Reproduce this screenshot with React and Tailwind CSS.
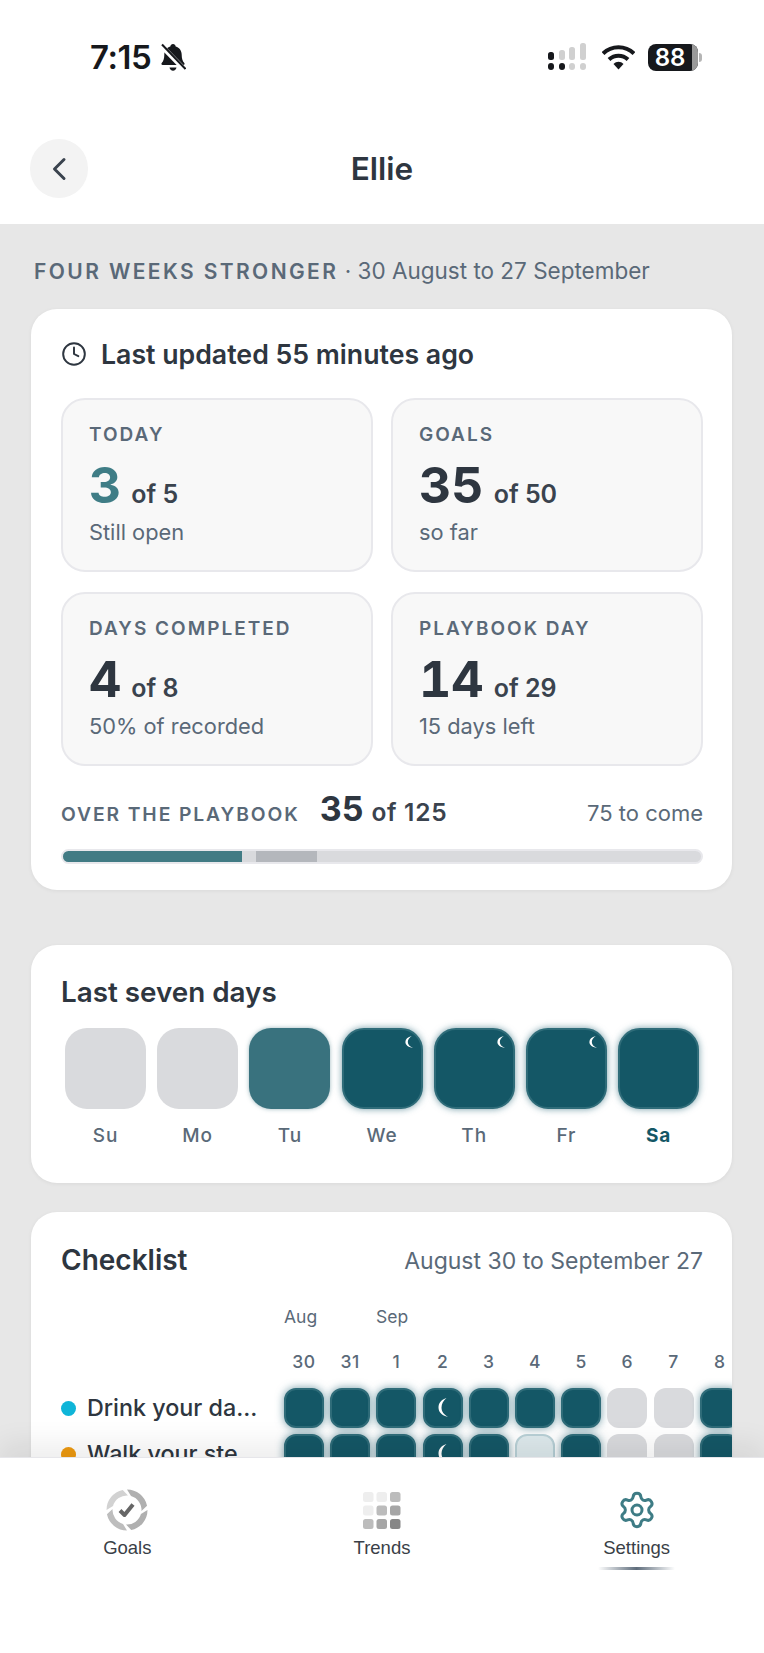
import { Clock, Settings } from 'lucide-react';

const stats = [
  { label: 'TODAY', value: '3', of: 'of 5', note: 'Still open', accent: true },
  { label: 'GOALS', value: '35', of: 'of 50', note: 'so far' },
  { label: 'DAYS COMPLETED', value: '4', of: 'of 8', note: '50% of recorded' },
  { label: 'PLAYBOOK DAY', value: '14', of: 'of 29', note: '15 days left' },
];

const week = [
  { day: 'Su', state: 'gray' },
  { day: 'Mo', state: 'gray' },
  { day: 'Tu', state: 'mid' },
  { day: 'We', state: 'dark', moon: true },
  { day: 'Th', state: 'dark', moon: true },
  { day: 'Fr', state: 'dark', moon: true },
  { day: 'Sa', state: 'dark', today: true },
];

const dates = ['30', '31', '1', '2', '3', '4', '5', '6', '7', '8'];

const rows = [
  { name: 'Drink your da...', dot: 'bg-[#0fb5d8]', cells: 'dddmdddggd' },
  { name: 'Walk your ste...', dot: 'bg-[#ee9a10]', cells: 'dddmdldggd' },
];

const Moon = ({ className }) => (
  <svg className={className} viewBox="0 0 8 12" fill="#fff" preserveAspectRatio="none">
    <path d="M6.800 0C2.600 1 0.400 3.200 0.400 6C0.400 8.800 2.800 11 8 12C4.800 10.500 2.800 8.600 2.800 6C2.800 3.600 4.400 1.500 6.800 0Z" />
  </svg>
);

const StatusBar = () => (
  <div className="flex justify-between items-start h-[128px] pt-[43px] pl-[90px] pr-[62px]">
    <div className="flex items-center h-[29px] text-[#16181c]">
      <span className="text-[33px] leading-[29px] font-semibold font-['Inter',sans-serif] tracking-[-0.5px]">7:15</span>
      <svg className="ml-[9px]" width="26" height="29" viewBox="0 0 26 29">
        <path d="M13 1c1.500 0 2.500 1 2.700 2.400 3.800 1 6 4.200 6 8.400 0 3.600.8 6.400 2.600 8.200.7.8.2 2-.9 2H2.600c-1.100 0-1.600-1.200-.9-2 1.800-1.800 2.600-4.600 2.600-8.200 0-4.200 2.200-7.400 6-8.400C10.500 2 11.500 1 13 1Z" fill="#16181c" />
        <path d="M9.500 24.500h7c-.3 2-1.700 3.200-3.500 3.200s-3.200-1.200-3.500-3.200Z" fill="#16181c" />
        <path d="M1 2.500L25 27" stroke="#fff" strokeWidth="5" />
        <path d="M2 1.500L25.500 26" stroke="#16181c" strokeWidth="2" />
      </svg>
    </div>
    <div className="flex items-center">
      <svg width="40" height="28" viewBox="0 0 40 28">
        <rect x="0" y="9" width="6" height="8" rx="2.500" fill="#16181c" />
        <rect x="11" y="7" width="6" height="10" rx="2.500" fill="#d0d0d0" />
        <rect x="21" y="4" width="6" height="13" rx="2.500" fill="#d0d0d0" />
        <rect x="32" y="0" width="6" height="17" rx="2.500" fill="#d0d0d0" />
        <rect x="0" y="20" width="6" height="7" rx="3" fill="#16181c" />
        <rect x="11" y="20" width="6" height="7" rx="3" fill="#16181c" />
        <rect x="21" y="20" width="6" height="7" rx="3" fill="#d0d0d0" />
        <rect x="32" y="20" width="6" height="7" rx="3" fill="#d0d0d0" />
      </svg>
      <svg className="ml-[14px]" width="33" height="25" viewBox="0 0 33 25">
        <path d="M1 8.500C9.500 0 23.500 0 32 8.500" fill="none" stroke="#16181c" strokeWidth="4" />
        <path d="M7 14.500C12.500 9.500 20.500 9.500 26 14.500" fill="none" stroke="#16181c" strokeWidth="4" />
        <path d="M11.500 19C14.500 16 18.500 16 21.500 19L16.500 24.500Z" fill="#16181c" />
      </svg>
      <div className="ml-[13px] flex items-center">
        <div className="w-[50px] h-[27px] rounded-[8px] overflow-hidden bg-[#16181c] flex">
          <div className="w-[44px] text-center text-white text-[24px] leading-[27px] font-semibold font-['Inter',sans-serif]">88</div>
          <div className="flex-1 bg-[#9a9a9a]" />
        </div>
        <div className="ml-[1px] w-[3px] h-[9px] rounded-r-full bg-[#b5b5b5]" />
      </div>
    </div>
  </div>
);

const Header = () => (
  <div className="flex items-center h-[96px] px-[30px] pb-[15px] bg-white">
    <button className="w-[58px] h-[59px] rounded-full bg-[#f3f3f3] flex items-center justify-center">
      <svg width="18" height="24" viewBox="0 0 18 24" fill="none" stroke="#3a434e" strokeWidth="3" strokeLinecap="round" strokeLinejoin="round">
        <path d="M14 2.500L4.500 12L14 21.500" />
      </svg>
    </button>
    <h1 className="flex-1 text-center text-[31.500px] leading-[36px] font-semibold text-[#2e3640]">Ellie</h1>
    <div className="w-[58px]" />
  </div>
);

const StatCard = ({ stat }) => (
  <div className="h-[174px] rounded-[24px] border-2 border-[#e8e8ec] bg-[#f8f8f8] pl-[26px] pt-[24px]">
    <div className="text-[19px] leading-[22px] font-semibold tracking-[2px] text-[#5a6978]">{stat.label}</div>
    <div className="flex items-baseline mt-[10px] h-[58px]">
      <span className={`text-[50px] leading-[58px] font-bold tabular-nums ${stat.accent ? 'text-[#3f7d86]' : 'text-[#2e3640]'}`}>{stat.value}</span>
      <span className="ml-[10px] text-[25px] font-semibold text-[#3a434e]">{stat.of}</span>
    </div>
    <div className="mt-[4px] text-[21.800px] leading-[28px] text-[#5a6978]">{stat.note}</div>
  </div>
);

const OverviewCard = () => (
  <section className="rounded-[26px] bg-white shadow-[0_1px_4px_rgba(0,0,0,0.06)] h-[581px] pl-[30px] pr-[29px] pt-[28px]">
    <div className="flex items-center h-[34px]">
      <Clock size={26} strokeWidth={1.8} color="#2e3640" />
      <span className="ml-[14px] text-[26.700px] leading-[34px] font-semibold text-[#2e3640] whitespace-nowrap">Last updated 55 minutes ago</span>
    </div>
    <div className="grid grid-cols-2 gap-x-[18px] gap-y-[20px] mt-[27px]">
      {stats.map((s) => <StatCard key={s.label} stat={s} />)}
    </div>
    <div className="flex items-baseline mt-[21px] h-[44px]">
      <span className="text-[19.300px] font-semibold tracking-[1.900px] text-[#5a6978]">OVER THE PLAYBOOK</span>
      <span className="ml-[20px] text-[34px] leading-[44px] font-bold text-[#2e3640]">35</span>
      <span className="ml-[8px] text-[24.500px] font-semibold tracking-[0.7px] text-[#3a434e]">of 125</span>
      <span className="ml-auto text-[22px] text-[#5a6978]">75 to come</span>
    </div>
    <div className="flex mt-[18px] h-[15px] rounded-full border-2 border-[#e8e8ec] bg-[#d9dadd] overflow-hidden">
      <div className="w-[179px] bg-[#417b84]" />
      <div className="w-[14px]" />
      <div className="w-[61px] bg-[#b4b7bc]" />
    </div>
  </section>
);

const WeekCard = () => (
  <section className="mt-[55px] rounded-[26px] bg-white shadow-[0_1px_4px_rgba(0,0,0,0.06)] h-[238px] pl-[34px] pr-[32px] pt-[30px]">
    <h2 className="-ml-[4px] text-[27.800px] leading-[34px] font-semibold text-[#2e3640]">Last seven days</h2>
    <div className="flex gap-[11.200px] mt-[19px]">
      {week.map((d) => (
        <div key={d.day} className="w-[81px]">
          <div className={`relative h-[81px] rounded-[22px] ${d.state === 'gray' ? 'bg-[#d9dadd]' : d.state === 'mid' ? 'bg-[#39727e] shadow-[0_0_4px_rgba(57,114,126,0.5)]' : 'bg-[#145766] border-2 border-[#2f6c79] shadow-[0_0_7px_rgba(20,88,106,0.6)]'}`}>
            {d.moon && <Moon className="absolute top-[6px] right-[8px] w-[8px] h-[12px]" />}
          </div>
          <div className={`mt-[15px] text-center text-[19px] leading-[24px] tracking-[1px] ${d.today ? 'font-bold text-[#145766]' : 'font-medium text-[#5a6978]'}`}>{d.day}</div>
        </div>
      ))}
    </div>
  </section>
);

const cellClass = {
  d: 'bg-[#145766] border-2 border-[#2f6c79] shadow-[0_0_8px_rgba(20,88,106,0.6)]',
  m: 'bg-[#145766] border-2 border-[#2f6c79] shadow-[0_0_8px_rgba(20,88,106,0.6)]',
  g: 'bg-[#d9dadd]',
  l: 'bg-[#dde9ec] border-2 border-[#b8d0d6]',
};

const ChecklistCard = () => (
  <section className="mt-[29px] rounded-[26px] bg-white shadow-[0_1px_4px_rgba(0,0,0,0.06)] h-[400px] overflow-hidden pl-[30px] pt-[31px]">
    <div className="flex items-center justify-between pr-[29px] h-[34px]">
      <h2 className="text-[28px] leading-[34px] font-semibold text-[#2e3640]">Checklist</h2>
      <span className="text-[23px] text-[#5a6978] mt-[2px]">August 30 to September 27</span>
    </div>
    <div className="pl-[223px] flex mt-[28px] h-[24px] text-[17.500px] leading-[24px] text-[#5a6978]">
      <span className="w-[92px]">Aug</span>
      <span>Sep</span>
    </div>
    <div className="pl-[223px] flex gap-[6.200px] mt-[21px] h-[24px]">
      {dates.map((d) => (
        <span key={d} className="w-[40px] shrink-0 text-center text-[17.500px] leading-[24px] font-medium tracking-[0.5px] text-[#5a6978]">{d}</span>
      ))}
    </div>
    <div className="flex flex-col gap-[6px] mt-[14px]">
      {rows.map((row) => (
        <div key={row.name} className="flex items-center h-[40px]">
          <span className={`w-[15px] h-[15px] rounded-full shrink-0 ${row.dot}`} />
          <span className="w-[208px] shrink-0 pl-[11px] text-[23.300px] font-medium text-[#2e3640] whitespace-nowrap">{row.name}</span>
          <div className="flex gap-[6.200px]">
            {row.cells.split('').map((c, i) => (
              <div key={i} className={`relative w-[40px] h-[40px] shrink-0 rounded-[12px] ${cellClass[c]}`}>
                {c === 'm' && <Moon className="absolute top-[8px] left-[13px] w-[10px] h-[19px]" />}
              </div>
            ))}
          </div>
        </div>
      ))}
    </div>
  </section>
);

// pinwheel ring: outer edge runs a0..a1, inner edge is skewed round by 16deg
const ringSegment = (a0, a1) => {
  const pt = (r, deg) => {
    const t = (deg * Math.PI) / 180;
    return `${(21 + r * Math.sin(t)).toFixed(2)} ${(21 - r * Math.cos(t)).toFixed(2)}`;
  };
  return `M${pt(20.500, a0)}A20.500 20.500 0 0 1 ${pt(20.500, a1)}L${pt(14.500, a1 + 16)}A14.500 14.500 0 0 0 ${pt(14.500, a0 + 16)}Z`;
};

const goalRing = [
  { from: 0, to: 78, fill: '#b0b0b0' },
  { from: 90, to: 168, fill: '#b0b0b0' },
  { from: 180, to: 258, fill: '#bdbdbd' },
  { from: 270, to: 348, fill: '#d2d2d2' },
];

const GoalsIcon = () => (
  <svg width="42" height="42" viewBox="0 0 42 42" fill="none">
    {goalRing.map((s) => <path key={s.from} d={ringSegment(s.from, s.to)} fill={s.fill} />)}
    <path d="M14 21.500L18.500 26L27 15.500" stroke="#666666" strokeWidth="4" strokeLinejoin="round" />
  </svg>
);

const trendColors = ['#eeeeee', '#eeeeee', '#bcbcbc', '#eeeeee', '#bcbcbc', '#a6a6a6', '#bcbcbc', '#a6a6a6', '#878787'];

const TrendsIcon = () => (
  <svg width="38" height="37" viewBox="0 0 38 37">
    {trendColors.map((c, i) => (
      <rect key={i} x={(i % 3) * 13.500} y={Math.floor(i / 3) * 13.500} width="10.500" height="10" rx="2.500" fill={c} />
    ))}
  </svg>
);

const TabBar = () => (
  <nav className="relative z-10 h-[196px] shrink-0 bg-white border-t border-[#e6e6ea] shadow-[0_-14px_26px_rgba(0,0,0,0.07)] grid grid-cols-3 pt-[31px] font-['Liberation_Sans',sans-serif] text-[18.500px] leading-[24px] text-[#3a3f47]">
    <div className="flex flex-col items-center">
      <div className="h-[42px] flex items-center justify-center"><GoalsIcon /></div>
      <span className="mt-[5px]">Goals</span>
    </div>
    <div className="flex flex-col items-center">
      <div className="h-[42px] flex items-center justify-center"><TrendsIcon /></div>
      <span className="mt-[5px]">Trends</span>
    </div>
    <div className="flex flex-col items-center">
      <div className="h-[42px] flex items-center justify-center"><Settings size={40} strokeWidth={1.8} color="#3e7c85" /></div>
      <span className="mt-[5px]">Settings</span>
      <div className="mt-[7px] w-[77px] h-[3px] rounded-full bg-gradient-to-r from-transparent via-[#5f6d7c] to-transparent" />
    </div>
  </nav>
);

export default function App() {
  return (
    <div className="w-[764px] h-[1653px] flex flex-col overflow-hidden bg-white font-['Inter',sans-serif]">
      <StatusBar />
      <Header />
      <main className="flex-1 min-h-0 overflow-hidden bg-[#e7e7e7] pl-[31px] pr-[32px] pt-[33px]">
        <div className="ml-[3px] text-[22.500px] leading-[28px] text-[#5a6978] whitespace-nowrap mb-[23px]">
          <span className="font-semibold tracking-[2.400px] text-[21px]">FOUR WEEKS STRONGER</span>
          <span> · 30 August to 27 September</span>
        </div>
        <OverviewCard />
        <WeekCard />
        <ChecklistCard />
      </main>
      <TabBar />
    </div>
  );
}
